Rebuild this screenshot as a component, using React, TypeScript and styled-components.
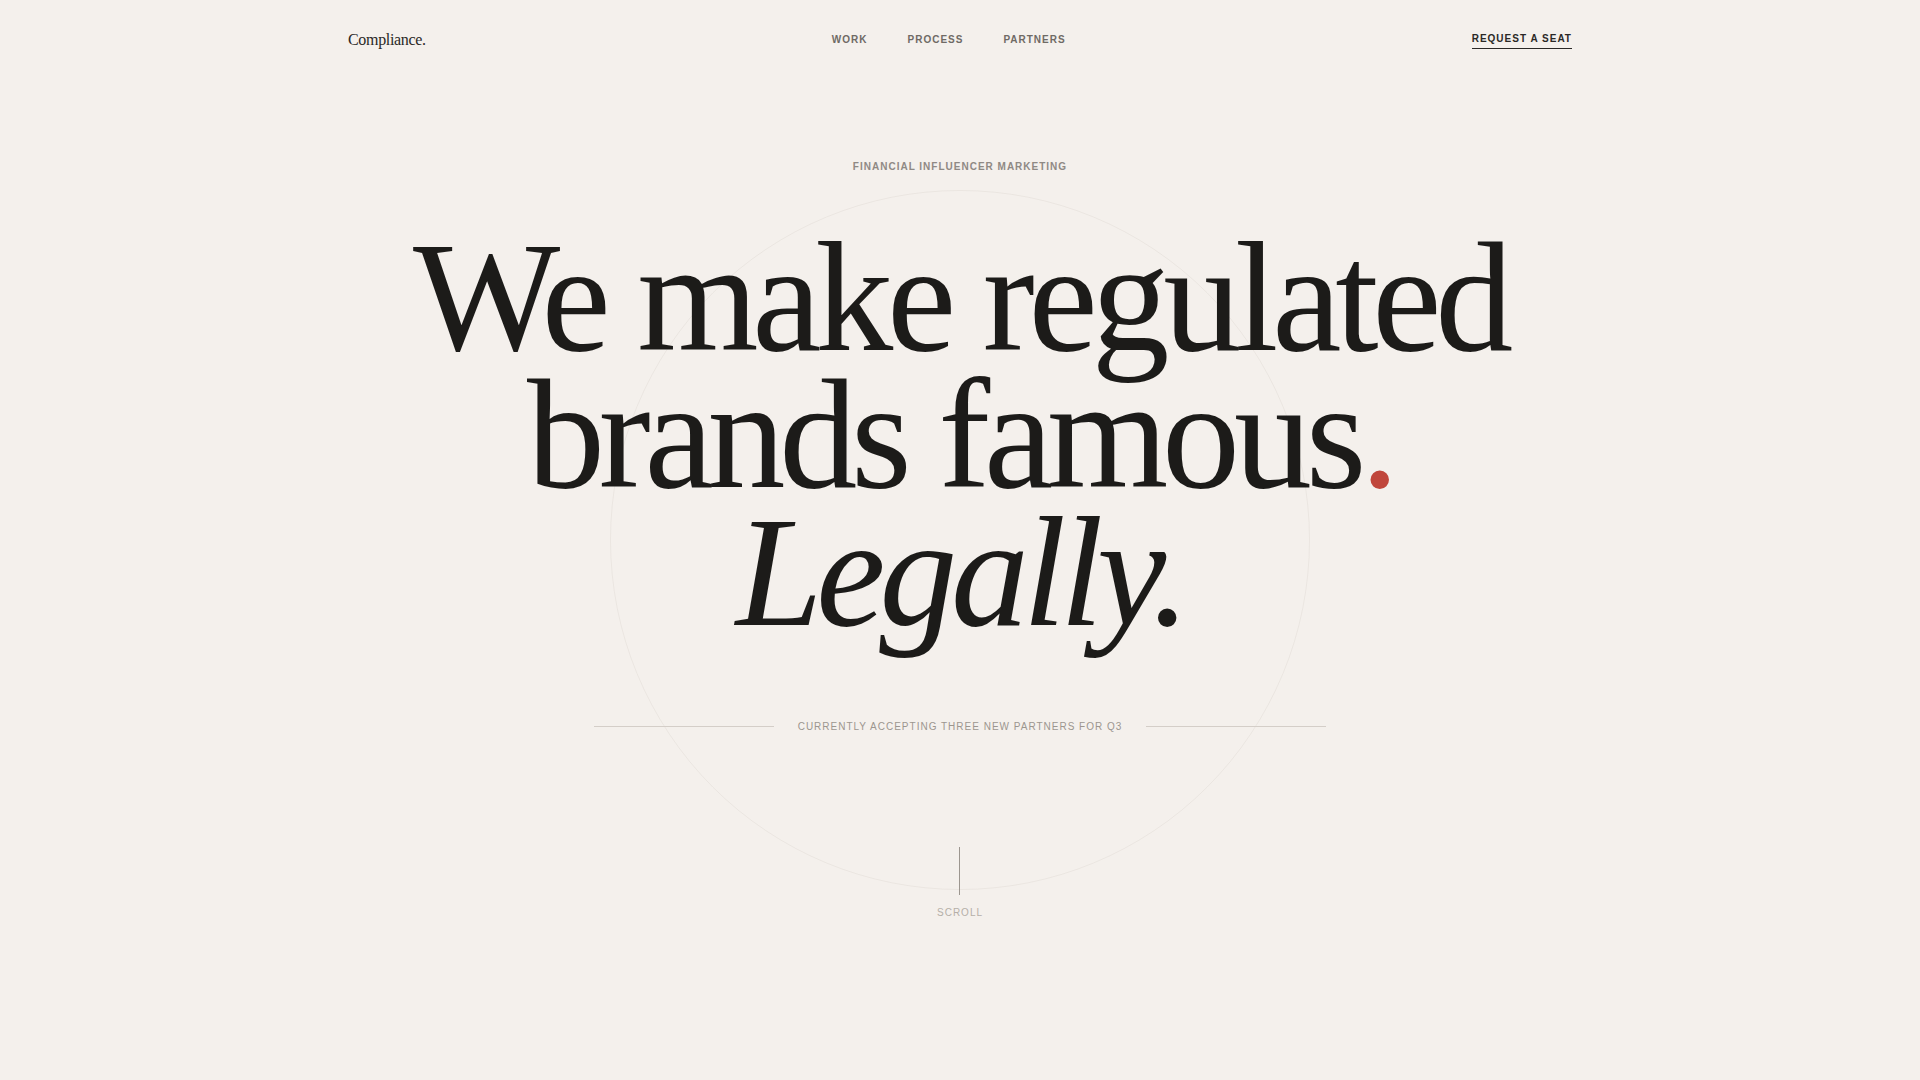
import styled, { createGlobalStyle } from "styled-components";

const GlobalStyle = createGlobalStyle`
  * {
    box-sizing: border-box;
  }
  html,
  body {
    margin: 0;
    padding: 0;
    background: #f4f0ec;
  }
  body {
    font-family: "Liberation Sans", Arial, sans-serif;
    color: #1c1b19;
  }
`;

const Page = styled.div`
  position: relative;
  min-height: 100vh;
  overflow: hidden;
`;

// faint decorative ring behind the headline
const Ring = styled.div`
  position: absolute;
  top: 190px;
  left: 50%;
  width: 700px;
  height: 700px;
  margin-left: -350px;
  border: 1px solid rgba(60, 40, 20, 0.05);
  border-radius: 50%;
  pointer-events: none;
`;

const Header = styled.header`
  position: relative;
  max-width: 1224px;
  height: 78px;
  margin: 0 auto;
  display: flex;
  align-items: center;
  justify-content: space-between;
`;

const Logo = styled.a`
  padding-top: 2px;
  font-family: "Liberation Serif", "Times New Roman", serif;
  font-size: 16px;
  letter-spacing: -0.02em;
  color: #2a2826;
  text-decoration: none;
`;

const Nav = styled.nav`
  display: flex;
  gap: 40px;
`;

const NavLink = styled.a`
  font-size: 10px;
  font-weight: 700;
  letter-spacing: 0.1em;
  text-transform: uppercase;
  color: #6f6a65;
  text-decoration: none;
`;

const Cta = styled.a`
  font-size: 10px;
  font-weight: 700;
  letter-spacing: 0.1em;
  text-transform: uppercase;
  color: #2a2826;
  text-decoration: none;
  margin-top: 4px;
  padding-bottom: 4px;
  border-bottom: 1px solid #2a2826;
`;

const Hero = styled.main`
  position: relative;
  display: flex;
  flex-direction: column;
  align-items: center;
  padding-top: 83px;
`;

const Eyebrow = styled.p`
  margin: 0;
  font-size: 10px;
  line-height: 12px;
  font-weight: 700;
  letter-spacing: 0.1em;
  text-transform: uppercase;
  color: #8f8984;
`;

const Headline = styled.h1`
  margin: 56px 0 0;
  font-family: "Liberation Serif", "Times New Roman", serif;
  font-weight: 400;
  font-size: 156px;
  line-height: 0.88;
  letter-spacing: -0.04em;
  text-align: center;
  color: #1c1b19;
`;

const Line = styled.span`
  display: block;
  white-space: nowrap;
`;

const Accent = styled.span`
  color: #c0463b;
`;

const Italic = styled.em`
  font-style: italic;
`;

const Availability = styled.div`
  margin-top: 80px;
  display: flex;
  align-items: center;
  gap: 24px;
`;

const Rule = styled.span`
  width: 180px;
  height: 1px;
  background: #d4cec8;
`;

const AvailabilityText = styled.span`
  font-size: 10px;
  line-height: 12px;
  letter-spacing: 0.1em;
  text-transform: uppercase;
  color: #9c968f;
`;

const Scroll = styled.div`
  margin-top: 114px;
  display: flex;
  flex-direction: column;
  align-items: center;
  gap: 12px;
`;

const ScrollLine = styled.span`
  width: 1px;
  height: 48px;
  background: #9c968f;
`;

const ScrollLabel = styled.span`
  font-size: 10px;
  line-height: 12px;
  letter-spacing: 0.1em;
  text-transform: uppercase;
  color: #b5afa8;
`;

const links = ["Work", "Process", "Partners"];

const App = () => {
  return (
    <Page>
      <GlobalStyle />
      <Ring />
      <Header>
        <Logo href="#">Compliance.</Logo>
        <Nav>
          {links.map((link) => (
            <NavLink key={link} href="#">
              {link}
            </NavLink>
          ))}
        </Nav>
        <Cta href="#">Request a seat</Cta>
      </Header>
      <Hero>
        <Eyebrow>Financial influencer marketing</Eyebrow>
        <Headline>
          <Line>We make regulated</Line>
          <Line>
            brands famous<Accent>.</Accent>
          </Line>
          <Line>
            <Italic>Legally.</Italic>
          </Line>
        </Headline>
        <Availability>
          <Rule />
          <AvailabilityText>Currently accepting three new partners for Q3</AvailabilityText>
          <Rule />
        </Availability>
        <Scroll>
          <ScrollLine />
          <ScrollLabel>Scroll</ScrollLabel>
        </Scroll>
      </Hero>
    </Page>
  );
};

export default App;
